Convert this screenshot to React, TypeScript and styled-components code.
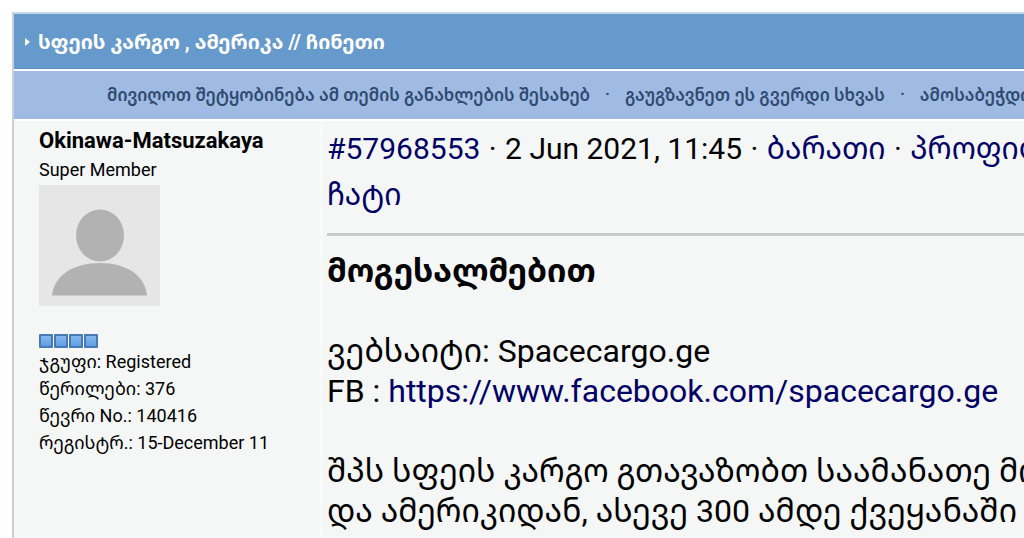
import React from "react";
import styled, { createGlobalStyle } from "styled-components";

const GlobalStyle = createGlobalStyle`
  * { box-sizing: border-box; }
  body {
    margin: 0;
    background: #fff;
    color: #000;
    font-family: Roboto, "Noto Sans Georgian", "DejaVu Sans", sans-serif;
    overflow-x: hidden;
  }
`;

const Page = styled.div`
  display: flex;
  min-height: 100vh;
  padding: 12px 0 0 12px;
`;

const Topic = styled.main`
  display: flex;
  flex: 1;
  flex-direction: column;
  min-width: 0;
  border-left: 2px solid #c5d0da;
  border-top: 2px solid #c3d9ea;
  white-space: nowrap;
  overflow: hidden;
`;

const TitleBar = styled.header`
  display: flex;
  align-items: center;
  gap: 8px;
  height: 55px;
  padding: 2px 0 0 11px;
  background: #6699cc;
  border-bottom: 1px solid #5f8fc2;
`;

const Title = styled.h1`
  margin: 0;
  color: #fff;
  font-size: 20px;
  line-height: 28px;
  font-weight: 700;
`;

const ToolBar = styled.nav`
  display: flex;
  align-items: center;
  gap: 15px;
  height: 48px;
  margin-top: 2px;
  padding: 0 0 2px 93px;
  background: #9fbbe3;
  color: #2f4a70;
  font-size: 17px;
  font-weight: 600;
`;

const ToolLink = styled.a`
  color: inherit;
  text-decoration: none;
`;

const Post = styled.article`
  display: flex;
  flex: 1;
  margin-top: 2px;
  background: #f5f7f6;
`;

const Author = styled.aside`
  flex: 0 0 308px;
  padding: 6px 0 0 25px;
  border-right: 1px solid #fff;
  font-size: 18px;
  line-height: 28px;
`;

const AuthorName = styled.h2`
  margin: 0;
  font-size: 22px;
  line-height: 28px;
  font-weight: 700;
`;

const Rank = styled.div`
  line-height: 30px;
`;

const Avatar = styled.svg`
  display: block;
  width: 121px;
  height: 121px;
`;

const Pips = styled.div`
  display: flex;
  gap: 1px;
  margin-top: 28px;
`;

const Pip = styled.span`
  width: 14px;
  height: 14px;
  border: 2px solid #4a78b6;
  border-radius: 1px;
  background: linear-gradient(#86b8ee, #5f9fe4);
`;

const Facts = styled.ul`
  margin: 0;
  padding: 0;
  list-style: none;
  line-height: 27px;
`;

const Content = styled.section`
  flex: 1;
  min-width: 0;
  padding: 5px 0 0 5px;
`;

const PostMeta = styled.div`
  font-size: 30px;
  line-height: 46px;
`;

const Dot = styled.span`
  margin: 0 1px;
`;

const PostLink = styled.a`
  color: #000066;
  text-decoration: none;
`;

const Rule = styled.hr`
  height: 3px;
  margin: 15px 0;
  border: 0;
  background: #c8cac9;
`;

const Body = styled.div`
  font-size: 32px;
  line-height: 40px;
`;

const Paragraph = styled.p`
  margin: 0 0 40px;

  &:last-child {
    margin-bottom: 0;
  }
`;

const facts = [
  "ჯგუფი: Registered",
  "წერილები: 376",
  "წევრი No.: 140416",
  "რეგისტრ.: 15-December 11",
];

export default function App() {
  return (
    <>
      <GlobalStyle />
      <Page>
        <Topic>
          <TitleBar>
            <svg width="5" height="8" viewBox="0 0 5 8" aria-hidden="true">
              <path d="M0 0L5 4L0 8Z" fill="#fff" />
            </svg>
            <Title>სფეის კარგო , ამერიკა // ჩინეთი</Title>
          </TitleBar>
          <ToolBar>
            <ToolLink href="#track">მივიღოთ შეტყობინება ამ თემის განახლების შესახებ</ToolLink>
            <span>·</span>
            <ToolLink href="#forward">გაუგზავნეთ ეს გვერდი სხვას</ToolLink>
            <span>·</span>
            <ToolLink href="#print">ამოსაბეჭდი ვერსია</ToolLink>
          </ToolBar>
          <Post>
            <Author>
              <AuthorName>Okinawa-Matsuzakaya</AuthorName>
              <Rank>Super Member</Rank>
              <Avatar viewBox="0 0 121 121" role="img" aria-label="Avatar">
                <rect width="121" height="121" fill="#e6e6e6" />
                <ellipse cx="61" cy="50.500" rx="24" ry="26" fill="#b2b2b2" />
                <path d="M13 110.500C15 90 35 78 61 78S106 90 108 110.500Z" fill="#b2b2b2" />
              </Avatar>
              <Pips>
                <Pip />
                <Pip />
                <Pip />
                <Pip />
              </Pips>
              <Facts>
                {facts.map((fact) => (
                  <li key={fact}>{fact}</li>
                ))}
              </Facts>
            </Author>
            <Content>
              <PostMeta>
                <PostLink href="#57968553">#57968553</PostLink> <Dot>·</Dot> 2 Jun 2021, 11:45{" "}
                <Dot>·</Dot> <PostLink href="#card">ბარათი</PostLink> <Dot>·</Dot>{" "}
                <PostLink href="#profile">პროფილი</PostLink>
                <br />
                <PostLink href="#chat">ჩატი</PostLink>
              </PostMeta>
              <Rule />
              <Body>
                <Paragraph>
                  <strong>მოგესალმებით</strong>
                </Paragraph>
                <Paragraph>
                  ვებსაიტი: Spacecargo.ge
                  <br />
                  FB :{" "}
                  <PostLink href="https://www.facebook.com/spacecargo.ge">
                    https://www.facebook.com/spacecargo.ge
                  </PostLink>
                </Paragraph>
                <Paragraph>
                  შპს სფეის კარგო გთავაზობთ საამანათე მიმოქცევას
                  <br />
                  და ამერიკიდან, ასევე 300 ამდე ქვეყანაში
                </Paragraph>
              </Body>
            </Content>
          </Post>
        </Topic>
      </Page>
    </>
  );
}
